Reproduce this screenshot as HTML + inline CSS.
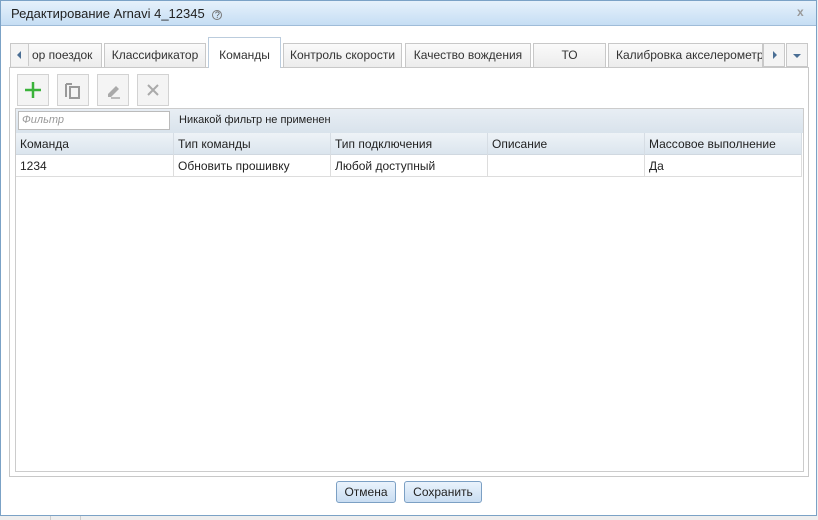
<!DOCTYPE html>
<html><head><meta charset="utf-8"><style>
*{box-sizing:border-box;margin:0;padding:0}
body{width:818px;height:520px;overflow:hidden;background:#f0f0f0;font-family:"Liberation Sans",sans-serif;font-size:12px;color:#222;position:relative}
.abs{position:absolute}
#dlg{left:0;top:0;width:817px;height:516px;border:1px solid #7ba2c6;background:#fff}
#hdr{left:0;top:0;width:815px;height:25px;background:linear-gradient(#e6f1fb,#c6def4);border-bottom:1px solid #9fbcd8}
.tab{position:absolute;top:42px;height:24px;border:1px solid #c8c8c8;border-bottom:none;background:linear-gradient(#fafafa,#ececec);text-align:center;line-height:22px;font-size:12px;color:#333;white-space:nowrap;overflow:hidden}
.btn{position:absolute;top:73px;width:32px;height:32px;border:1px solid #d2d2d2;background:#f4f4f4}
.col{position:absolute;top:0;height:22px;line-height:22px;padding-left:4px;border-right:1px solid #d6dde4;font-size:12px}
.b2{position:absolute;top:480px;height:22px;border:1px solid #7ca0c4;border-radius:3px;background:linear-gradient(#eaf3fc,#c9ddf2);line-height:20px;text-align:center;font-size:12px}
</style></head><body>
<div class="abs" style="left:0;top:516px;width:818px;height:4px;background:#eee"></div>
<div class="abs" style="left:50px;top:516px;width:1px;height:4px;background:#ccc"></div>
<div class="abs" style="left:80px;top:516px;width:1px;height:4px;background:#ccc"></div>
<div id="dlg" class="abs">
<div id="hdr" class="abs"><span class="abs" style="left:10px;top:5px;font-size:13px;color:#222">Редактирование Arnavi 4_12345 <span style="font-size:9px;color:#555;border:1px solid #777;border-radius:50%;display:inline-block;width:10px;height:10px;line-height:9px;text-align:center;margin-left:4px">?</span></span><span class="abs" style="left:796px;top:4px;color:#999;font-size:12px;font-weight:bold">x</span></div>

<div class="tab" style="left:9px;width:92px;text-align:left;padding-left:21px">ор поездок</div>
<div class="abs" style="left:10px;top:43px;width:18px;height:22px;border-right:1px solid #ccc;background:#f4f4f4"><svg width="18" height="22"><path d="M10 7 L6 11 L10 15Z" fill="#4a6e94"/></svg></div>
<div class="tab" style="left:103px;width:102px">Классификатор</div>
<div class="tab" style="left:207px;top:36px;height:31px;width:73px;background:#fff;line-height:34px;border-color:#bcd;z-index:2">Команды</div>
<div class="tab" style="left:282px;width:119px">Контроль скорости</div>
<div class="tab" style="left:404px;width:126px">Качество вождения</div>
<div class="tab" style="left:532px;width:73px">ТО</div>
<div class="tab" style="left:607px;width:155px;text-align:left;padding-left:7px">Калибровка акселерометр</div>
<div class="abs" style="left:762px;top:42px;width:22px;height:24px;border:1px solid #c8c8c8;background:#f4f4f4"><svg width="20" height="22"><path d="M9 7 L13 11 L9 15Z" fill="#4a6e94"/></svg></div>
<div class="abs" style="left:785px;top:42px;width:22px;height:24px;border:1px solid #c8c8c8;background:#f4f4f4"><svg width="20" height="22"><path d="M6 10 L14 10 L10 14Z" fill="#4a6e94"/></svg></div>

<div class="abs" style="left:8px;top:66px;width:800px;height:410px;border:1px solid #c8c8c8"></div>
<div class="btn" style="left:16px"><svg width="30" height="30"><path d="M15 7V23M7 15H23" stroke="#3bb33b" stroke-width="2.5"/></svg></div>
<div class="btn" style="left:56px"><svg width="30" height="30"><path d="M8 9V22M8 9H14" stroke="#999" stroke-width="2" fill="none"/><rect x="12" y="12" width="9" height="11" stroke="#999" stroke-width="2" fill="none"/></svg></div>
<div class="btn" style="left:96px"><svg width="30" height="30"><path d="M10 19 L18 11 L21 14 L13 22 L10 22Z" fill="#aaa"/><path d="M13 23H22" stroke="#aaa" stroke-width="1.5"/></svg></div>
<div class="btn" style="left:136px"><svg width="30" height="30"><path d="M10 10L20 20M20 10L10 20" stroke="#aaa" stroke-width="2"/></svg></div>

<div class="abs" style="left:14px;top:107px;width:789px;height:364px;border:1px solid #ccc"></div>
<div class="abs" style="left:15px;top:108px;width:787px;height:24px;background:linear-gradient(#e8eef4,#d9e3ec)"></div>
<div class="abs" style="left:17px;top:110px;width:152px;height:19px;border:1px solid #bbb;background:#fff;font-style:italic;color:#999;font-size:11px;padding:2px 3px">Фильтр</div>
<span class="abs" style="left:178px;top:113px;font-size:11px">Никакой фильтр не применен</span>
<div class="abs" style="left:15px;top:132px;width:786px;height:22px;background:linear-gradient(#eef3f7,#dbe5ee);border-bottom:1px solid #d0d8e0">
<div class="col" style="left:0;width:158px">Команда</div><div class="col" style="left:158px;width:157px">Тип команды</div><div class="col" style="left:315px;width:157px">Тип подключения</div><div class="col" style="left:472px;width:157px">Описание</div><div class="col" style="left:629px;width:157px">Массовое выполнение</div></div>
<div class="abs" style="left:15px;top:154px;width:786px;height:22px;border-bottom:1px solid #ddd;border-right:1px solid #ddd">
<div class="col" style="left:0;width:158px;border-color:#ddd">1234</div><div class="col" style="left:158px;width:157px;border-color:#ddd">Обновить прошивку</div><div class="col" style="left:315px;width:157px;border-color:#ddd">Любой доступный</div><div class="col" style="left:472px;width:157px;border-color:#ddd"></div><div class="col" style="left:629px;width:157px;border:none">Да</div></div>

<div class="b2" style="left:335px;width:60px">Отмена</div>
<div class="b2" style="left:403px;width:78px">Сохранить</div>
</div>
</body></html>
